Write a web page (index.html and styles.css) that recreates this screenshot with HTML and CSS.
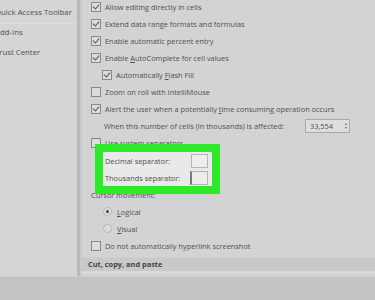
FILE: index.html
```html
<html>
<head>
    <meta charset="UTF-8">
    <title>Excel Options - Advanced</title>
    <link rel="stylesheet" href="styles.css">
</head>
<body>
    <div class="window">
        <div class="sidebar">
            <div class="nav-item active">Quick Access Toolbar</div>
            <div class="nav-item">Add-Ins</div>
            <div class="nav-item">Trust Center</div>
        </div>

        <div class="main">
            <div class="options">
                <div class="row"><span class="box checked"></span><span>Allow editing directly in cells</span></div>
                <div class="row"><span class="box checked"></span><span>Extend data range formats and formulas</span></div>
                <div class="row"><span class="box checked"></span><span>Enable automatic percent entry</span></div>
                <div class="row"><span class="box checked"></span><span>Enable <u>A</u>utoComplete for cell values</span></div>
                <div class="row indent"><span class="box checked"></span><span>Automatically <u>F</u>lash Fill</span></div>
                <div class="row"><span class="box"></span><span>Zoom on roll with IntelliMouse</span></div>
                <div class="row"><span class="box checked"></span><span>Alert the user when a potentially <u>t</u>ime consuming operation occurs</span></div>
                <div class="row text-row">
                    <span>When this number of cells (in thousands) is affected:</span>
                    <span class="spin">33,554<span class="arrows"><i>&#9652;</i><i>&#9662;</i></span></span>
                </div>
                <div class="row"><span class="box"></span><span><u>U</u>se system separators</span></div>

                <!-- highlighted separator fields -->
                <div class="separators">
                    <div class="sep-row"><span>Decimal separator:</span><span class="field"></span></div>
                    <div class="sep-row"><span>Thousands separator:</span><span class="field caret"></span></div>
                </div>

                <div class="row label">Cursor movement:</div>
                <div class="row radio-row"><span class="radio on"></span><span><u>L</u>ogical</span></div>
                <div class="row radio-row"><span class="radio"></span><span><u>V</u>isual</span></div>
                <div class="row"><span class="box"></span><span>Do not automatically hyperlink screenshot</span></div>
            </div>

            <div class="section">Cut, copy, and paste</div>
        </div>
    </div>
</body>
</html>
```

FILE: styles.css
```css
body {
    margin: 0;
    width: 375px;
    height: 300px;
    overflow: hidden;
    background-color: #c3c3c3;
    font-family: 'Open Sans', 'Noto Sans', sans-serif;
    font-size: 7.4px;
    color: #505050;
}

.window {
    display: flex;
    height: 276px;
    border-bottom: 1px solid #cdcdcd;
}

.sidebar {
    width: 77px;
    background-color: #d5d5d5;
    border-right: 3px solid #b9b9b9;
    padding-top: 4px;
    overflow: hidden;
}

.nav-item {
    height: 20px;
    line-height: 16px;
    font-size: 7.8px;
    text-indent: -5px;
    white-space: nowrap;
}

.nav-item.active {
    border-bottom: 1px solid #dcdcdc;
    height: 19px;
}

.main {
    flex: 1;
    display: flex;
    flex-direction: column;
    background-color: #d3d3d3;
    border-left: 2px solid #cbcbcb;
    overflow: hidden;
}

.options {
    margin-top: -2px;
    padding-left: 9px;
}

.row {
    height: 17px;
    display: flex;
    align-items: center;
    white-space: nowrap;
}

u {
    text-decoration-thickness: 0.5px;
    text-underline-offset: 1px;
}

.row.indent {
    padding-left: 11px;
}

.box {
    width: 8px;
    height: 8px;
    border: 1px solid #8a8a8a;
    background-color: #dcdcdc;
    margin-right: 4px;
    position: relative;
    flex-shrink: 0;
}

.box.checked::after {
    content: "";
    position: absolute;
    left: 2px;
    top: 0px;
    width: 3px;
    height: 5px;
    border-right: 1.2px solid #555;
    border-bottom: 1.2px solid #555;
    transform: rotate(40deg);
}

.text-row {
    padding-left: 13px;
    width: 246px;
}

.spin {
    margin-left: auto;
    width: 45px;
    height: 14px;
    box-sizing: border-box;
    border: 1px solid #a9a9a9;
    background-color: #dedede;
    display: flex;
    align-items: center;
    justify-content: space-between;
    padding: 0 2px 0 4px;
}

.arrows {
    display: flex;
    flex-direction: column;
    font-size: 4px;
    line-height: 4px;
    color: #666;
}

.arrows i {
    font-style: normal;
}

.separators {
    position: relative;
    width: 109px;
    margin: 1px 0 1px 12px;
    background-color: #e9e9e9;
    outline: 8px solid #2ee82a;
}

.sep-row {
    height: 17px;
    display: flex;
    align-items: center;
    padding-left: 2px;
    white-space: nowrap;
}

.field {
    margin-left: auto;
    margin-right: 4px;
    width: 17px;
    height: 14px;
    box-sizing: border-box;
    border: 1px solid #b5b5b5;
    background-color: #ededed;
}

.field.caret {
    width: 18px;
    border-left: 2px solid #7a7a7a;
}

.label {
    height: 16px;
}

.radio-row {
    padding-left: 12px;
}

.radio {
    width: 7px;
    height: 7px;
    border-radius: 50%;
    border: 1px solid #b8b8b8;
    background-color: #dcdcdc;
    margin-right: 5px;
    display: flex;
    align-items: center;
    justify-content: center;
}

.radio.on::after {
    content: "";
    width: 3px;
    height: 3px;
    border-radius: 50%;
    background-color: #444;
}

.section {
    margin-top: 3px;
    height: 13px;
    line-height: 13px;
    padding-left: 6px;
    background-color: #c9c9c9;
    border-top: 1px solid #cecece;
    border-bottom: 3px solid #d9d9d9;
    font-weight: bold;
    color: #454545;
}
```
